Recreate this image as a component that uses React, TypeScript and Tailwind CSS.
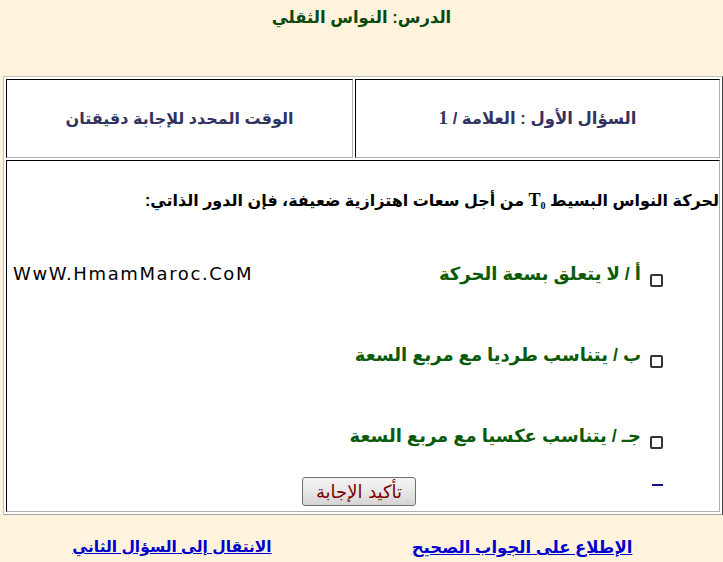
import React from "react";

function Checkbox() {
  return (
    <span className="mt-[12px] block h-[13px] w-[13px] shrink-0 rounded-[2px] border-2 border-[#333333] bg-white" />
  );
}

function Option({ label }: { label: string }) {
  return (
    <div className="flex h-[24px] items-start">
      <Checkbox />
      <span className="mr-[9px] text-[18px] font-bold leading-[24px] text-[#0a5a0a]">{label}</span>
    </div>
  );
}

export default function App() {
  return (
    <div
      dir="rtl"
      className="min-h-screen w-[723px] bg-[#fff3dd] font-['Liberation_Sans','DejaVu_Sans',sans-serif]"
    >
      <div className="h-[76px] pt-[5px] text-center text-[16.5px] font-bold leading-[24px] text-[#0b4a0b]">
        الدرس: النواس الثقلي
      </div>

      <div className="w-[720px] border border-b-[#a0a0a0] border-l-[#c0c0c0] border-r-[#404040] border-t-[#c0c0c0] bg-white p-[2px]">
        <div className="grid grid-cols-[365px_347px] gap-[2px]">
          <div className="flex h-[79px] items-center justify-center border border-b-[#b0b0b0] border-l-black border-r-[#b0b0b0] border-t-black text-[16.5px] font-bold text-[#33335f]">
            <span>
              السؤال الأول : العلامة /{" "}
              <span className="font-['Liberation_Serif',serif] text-[19px] font-bold">1</span>
            </span>
          </div>
          <div className="flex h-[79px] items-center justify-center border border-b-[#b0b0b0] border-l-black border-r-[#b0b0b0] border-t-black text-[16px] font-bold text-[#33335f]">
            الوقت المحدد للإجابة دقيقتان
          </div>
        </div>

        <div className="mt-[2px] flex h-[352px] flex-col border border-b-[#b0b0b0] border-l-black border-r-[#b0b0b0] border-t-black pt-[27px]">
          <div className="h-[24px] whitespace-nowrap text-[16px] font-bold leading-[24px] text-black">
            لحركة النواس البسيط{" "}
            <span dir="ltr" className="font-['Liberation_Serif',serif] text-[18px]">
              T<sub className="text-[10px]">0</sub>
            </span>{" "}
            من أجل سعات اهتزازية ضعيفة، فإن الدور الذاتي:
          </div>

          <div className="mt-[50px] flex items-start justify-between pl-[6px] pr-[56px]">
            <Option label="أ / لا يتعلق بسعة الحركة" />
            <span
              dir="ltr"
              className="text-[18px] leading-[24px] tracking-[1.6px] text-black font-['DejaVu_Sans',sans-serif]"
            >
              WwW.HmamMaroc.CoM
            </span>
          </div>

          <div className="mt-[57px] pr-[56px]">
            <Option label="ب / يتناسب طرديا مع مربع السعة" />
          </div>

          <div className="mt-[57px] pr-[56px]">
            <Option label="جـ / يتناسب عكسيا مع مربع السعة" />
          </div>

          <div className="mt-[29px] grid grid-cols-[1fr_auto_1fr]">
            <div className="pr-[56px] pt-[7px]">
              <span className="block h-[2px] w-[11px] bg-[#10108a]" />
            </div>
            <button className="mr-[8px] h-[29px] w-[114px] rounded-[3px] border border-[#707070] bg-gradient-to-b from-[#f4f4f4] via-[#e8e8e8] to-[#d4d4d4] text-[18px] leading-[26px] text-[#800000] font-['DejaVu_Sans',sans-serif]">
              تأكيد الإجابة
            </button>
            <div />
          </div>
        </div>
      </div>

      <div className="flex gap-[30px] pr-[41px] pt-[20px]">
        <div className="w-[320px] text-center">
          <a href="#" className="text-[16.5px] font-bold leading-[24px] text-[#0000cc] underline">
            الإطلاع على الجواب الصحيح
          </a>
        </div>
        <div className="w-[320px] text-center">
          <a href="#" className="text-[15.5px] font-bold leading-[24px] text-[#0000cc] underline">
            الانتقال إلى السؤال الثاني
          </a>
        </div>
      </div>
    </div>
  );
}
